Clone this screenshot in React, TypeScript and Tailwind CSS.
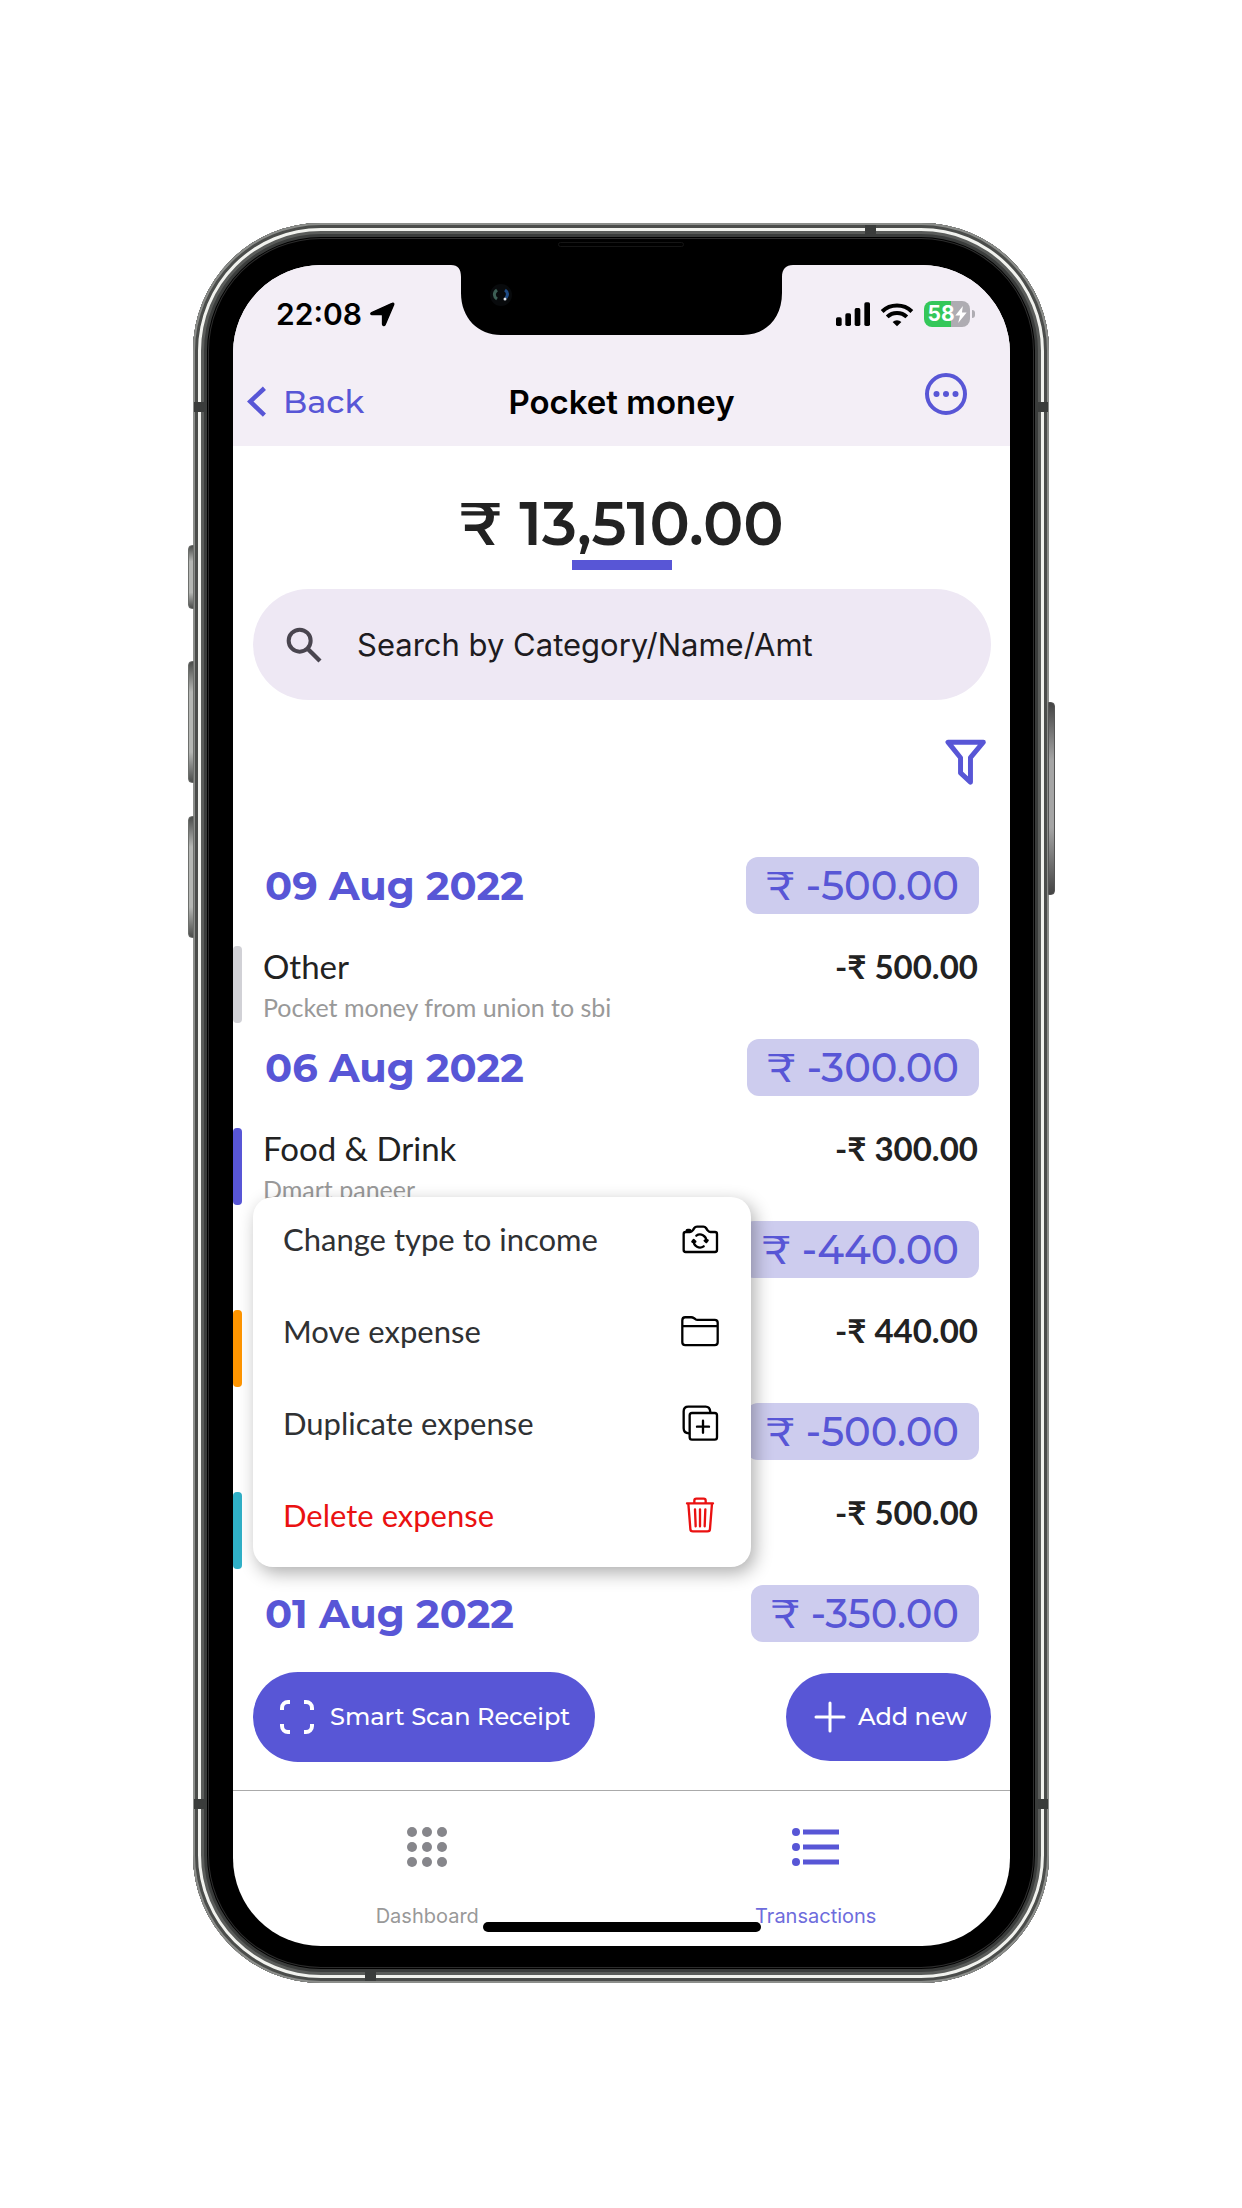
import type { ReactNode } from "react";

const DISPLAY = "font-['Montserrat','Inter',sans-serif]";
const BODY = "font-['Lato',sans-serif]";

type Entry = { name: string; note: string; amount: string; bar: string };
type Day = { date: string; total: string; entry?: Entry };

const days: Day[] = [
  {
    date: "09 Aug 2022",
    total: "₹ -500.00",
    entry: { name: "Other", note: "Pocket money from union to sbi", amount: "500.00", bar: "bg-[#d1d1d6]" },
  },
  {
    date: "06 Aug 2022",
    total: "₹ -300.00",
    entry: { name: "Food & Drink", note: "Dmart paneer", amount: "300.00", bar: "bg-[#5856d6]" },
  },
  { date: "", total: "₹ -440.00", entry: { name: "", note: "", amount: "440.00", bar: "bg-[#ff9500]" } },
  { date: "", total: "₹ -500.00", entry: { name: "", note: "", amount: "500.00", bar: "bg-[#30b0c7]" } },
  { date: "01 Aug 2022", total: "₹ -350.00" },
];

function CameraIcon() {
  return (
    <svg viewBox="186 100 114 90" className="h-[30px] w-[38px]" fill="none" stroke="currentColor" strokeWidth="7" strokeLinecap="round" strokeLinejoin="round" aria-hidden="true">
      <path d="M200 184H288a6 6 0 0 0 6-6V130a6 6 0 0 0-6-6H274c-4 0-6-2-9-6l-4-6c-2-3-4-4-8-4H234c-4 0-6 1-8 4l-4 6c-3 4-5 6-9 6H200a6 6 0 0 0-6 6V178a6 6 0 0 0 6 6Z" />
      <path d="M203 122v-2c0-2 1-2 3-2h5c2 0 3 0 3 2v2" />
      <path d="M232 135a19 19 0 0 1 30 16M254 167a19 19 0 0 1-30-16" />
      <path d="M257 150l5 4 4-5M220 153l4-5 5 5" />
    </svg>
  );
}

function FolderIcon() {
  return (
    <svg viewBox="182 375 116 96" className="h-8 w-[38px]" fill="none" stroke="currentColor" strokeWidth="7" strokeLinejoin="round" aria-hidden="true">
      <path d="M186 391c0-7 3-10 9-10H213c4 0 6 1 9 3l4 3c2 2 4 2 7 2H285c6 0 9 3 9 9V457c0 6-3 9-9 9H195c-6 0-9-3-9-9ZM186 408H294" />
    </svg>
  );
}

function DuplicateIcon() {
  return (
    <svg viewBox="186 643 114 114" className="size-[38px]" fill="none" stroke="currentColor" strokeWidth="7" strokeLinecap="round" strokeLinejoin="round" aria-hidden="true">
      <rect x="212" y="670" width="82" height="80" rx="7" />
      <path d="M210 731c-10 0-16-6-16-15V665c0-9 5-14 14-14H260c8 0 13 5 14 16M252 693v36M234 711h36" />
    </svg>
  );
}

function TrashIcon() {
  return (
    <svg viewBox="183 921 114 114" className="size-[38px]" fill="none" stroke="currentColor" strokeWidth="7" strokeLinecap="round" strokeLinejoin="round" aria-hidden="true">
      <path d="M201 943H279M205 943l6 76c0 5 3 8 8 8H262c5 0 8-3 8-8l6-76M223 942v-7c0-4 2-6 6-6H251c4 0 6 2 6 6v7M225 961l2 51M240 961v51M256 961l-2 51" />
    </svg>
  );
}

const actions: { label: string; icon: ReactNode; tone: string; iconTone: string }[] = [
  { label: "Change type to income", icon: <CameraIcon />, tone: "text-[#2f3133]", iconTone: "text-black" },
  { label: "Move expense", icon: <FolderIcon />, tone: "text-[#2f3133]", iconTone: "text-black" },
  { label: "Duplicate expense", icon: <DuplicateIcon />, tone: "text-[#2f3133]", iconTone: "text-black" },
  { label: "Delete expense", icon: <TrashIcon />, tone: "text-[#ea1111]", iconTone: "text-[#ea1111]" },
];

function StatusBar() {
  return (
    <div className="flex h-[98px] items-center justify-between pr-[35px] pl-[43px]">
      <div className="flex items-center gap-2 text-[30px] leading-10 font-semibold text-black">
        <span>22:08</span>
        <svg viewBox="569 276 76 76" className="size-[25px]" fill="currentColor" stroke="currentColor" strokeWidth="4" strokeLinejoin="round" aria-hidden="true">
          <path d="M636 280c4-2 6 0 5 4L615 345c-2 4-8 3-8-1V317c0-2-1-3-3-3H575c-4 0-5-4-1-6Z" />
        </svg>
      </div>
      <div className="flex items-center gap-[10px]">
        <svg viewBox="648 274 102 72" className="h-6 w-[34px]" aria-hidden="true">
          <rect x="648" y="320" width="17" height="26" rx="5" />
          <rect x="676" y="308" width="17" height="38" rx="5" />
          <rect x="704" y="292" width="17" height="54" rx="5" />
          <rect x="733" y="275" width="17" height="71" rx="5" />
        </svg>
        <svg viewBox="782 272 100 74" className="h-[25px] w-[34px]" fill="none" stroke="#000" strokeWidth="12" aria-hidden="true">
          <path d="M788 300a64 64 0 0 1 88 0M803 316a42 42 0 0 1 58 0" />
          <path d="M819 331a19 19 0 0 1 26 0l-13 13Z" fill="#000" stroke="none" />
        </svg>
        <div className="flex items-center gap-[2px]">
          <div className="flex h-[26px] w-[46px] items-center justify-center rounded-lg bg-[linear-gradient(90deg,#34c759_58%,#aeacb2_58%)] text-white">
            <span className="text-[21px] leading-[26px] font-bold">58</span>
            <svg viewBox="0 0 12 18" className="h-[17px] w-3" fill="currentColor" aria-hidden="true">
              <path d="M8 0 0 10h5L3 18l9-11H7Z" />
            </svg>
          </div>
          <span className="h-2 w-[3px] rounded-r-full bg-[#aeacb2]" />
        </div>
      </div>
    </div>
  );
}

function NavBar() {
  return (
    <nav className="grid h-[83px] grid-cols-[1fr_auto_1fr] items-center px-[14px] pb-[6px]">
      <button className={`flex items-center gap-4 justify-self-start text-[32px] leading-10 font-medium text-[#5856d6] ${DISPLAY}`}>
        <svg viewBox="200 528 62 94" className="h-[31px] w-5" fill="none" stroke="currentColor" strokeWidth="14" aria-hidden="true">
          <path d="M254 534 210 575l44 42" />
        </svg>
        Back
      </button>
      <h1 className="text-[33px] leading-10 font-semibold text-black">Pocket money</h1>
      <button aria-label="More options" className="mt-[9px] mr-7 self-start justify-self-end text-[#5856d6]">
        <svg viewBox="0 0 44 44" className="size-[44px]" fill="none" stroke="currentColor" strokeWidth="4" aria-hidden="true">
          <circle cx="22" cy="22" r="19" />
          <g fill="currentColor" stroke="none">
            <circle cx="12.5" cy="22" r="3" />
            <circle cx="22" cy="22" r="3" />
            <circle cx="31.5" cy="22" r="3" />
          </g>
        </svg>
      </button>
    </nav>
  );
}

function Notch() {
  return (
    <div className="absolute top-0 left-1/2 -translate-x-1/2">
      <svg viewBox="0 0 342 70" className="h-[70px] w-[342px]" aria-hidden="true">
        <path d="M0 0C7 0 10 4 10 12V28C10 53 27 70 50 70H292C315 70 331 53 331 28V12C331 4 335 0 342 0Z" fill="#000" />
        <circle cx="50" cy="30" r="11" fill="#080a0c" />
        <path d="M46 25c-4 3-3 7 0 9" fill="none" stroke="#3d5f55" strokeWidth="3" />
        <path d="M54 25c3 2 3 5 1 8" fill="none" stroke="#1f4b85" strokeWidth="3" />
        <circle cx="54" cy="34" r="1.5" fill="#dfe6f0" />
      </svg>
    </div>
  );
}

function DayGroup({ day }: { day: Day }) {
  return (
    <li>
      <div className="flex h-[57px] items-center justify-between pr-[31px] pl-8">
        <h2 className={`text-[40px] leading-[57px] font-bold text-[#5856d6] ${DISPLAY}`}>{day.date}</h2>
        <span className={`rounded-xl bg-[#cdccee] px-5 text-[40px] leading-[57px] font-medium text-[#5856d6] ${DISPLAY}`}>{day.total}</span>
      </div>
      {day.entry && (
        <div className="mt-8 mb-4 flex h-[77px] pr-8">
          <span className={`w-[9px] rounded-[4px] ${day.entry.bar}`} />
          <div className={`ml-[21px] flex-1 ${BODY}`}>
            <p className="text-[33px] leading-10 text-[#222]">{day.entry.name}</p>
            <p className="text-[25px] leading-[42px] text-[#999]">{day.entry.note}</p>
          </div>
          <p className={`text-[33px] leading-10 font-bold text-[#222] ${BODY}`}>-₹ {day.entry.amount}</p>
        </div>
      )}
    </li>
  );
}

function ActionMenu() {
  return (
    <div role="menu" className="absolute top-[340px] left-5 w-[498px] rounded-[20px] bg-white pb-[2px] shadow-[4px_6px_18px_rgba(0,0,0,0.32)]">
      {actions.map((a) => (
        <button
          key={a.label}
          role="menuitem"
          className={`flex h-[92px] w-full items-center justify-between pr-8 pb-2 pl-[30px] text-left text-[31px] leading-10 ${BODY} ${a.tone}`}
        >
          {a.label}
          <span className={a.iconTone}>{a.icon}</span>
        </button>
      ))}
    </div>
  );
}

function TabBar() {
  return (
    <div className="grid h-[156px] grid-cols-2 border-t border-[#aaa] text-[20px] leading-6">
      <a href="#dashboard" className="flex flex-col items-center pt-9 text-[#999]">
        <svg viewBox="0 0 41 41" className="size-[41px]" fill="#86868b" aria-hidden="true">
          {[5, 20, 35].map((y) => [5, 20, 35].map((x) => <circle key={`${x}-${y}`} cx={x} cy={y} r="5" />))}
        </svg>
        <span className="mt-9">Dashboard</span>
      </a>
      <a href="#transactions" className="flex flex-col items-center pt-9 text-[#6e6cdc]">
        <svg viewBox="0 0 47 41" className="h-[41px] w-[47px]" fill="#5856d6" aria-hidden="true">
          {[5, 20, 35].map((y) => (
            <g key={y}>
              <circle cx="4" cy={y} r="4" />
              <rect x="11" y={y - 2.5} width="36" height="5" />
            </g>
          ))}
        </svg>
        <span className="mt-9">Transactions</span>
      </a>
    </div>
  );
}

function SideButtons() {
  const left = "absolute -left-[5px] w-[6px] rounded-l-sm border border-[#6d6f6c] bg-[linear-gradient(#4b4d4b,#b5b7b4_25%,#b5b7b4_75%,#4b4d4b)]";
  return (
    <>
      <span className={`${left} top-[322px] h-16`} />
      <span className={`${left} top-[438px] h-[122px]`} />
      <span className={`${left} top-[593px] h-[122px]`} />
      <span className="absolute top-[479px] -right-[6px] h-[193px] w-[7px] rounded-r-sm border border-[#555] bg-[linear-gradient(#444,#a5a5a5_30%,#a5a5a5_65%,#444)]" />
      <span className="absolute top-[179px] left-[1px] h-[10px] w-[10px] bg-[#3a3c3b]" />
      <span className="absolute top-[179px] right-[1px] h-[10px] w-[10px] bg-[#3a3c3b]" />
      <span className="absolute bottom-[174px] left-[1px] h-[10px] w-[10px] bg-[#3a3c3b]" />
      <span className="absolute right-[1px] bottom-[174px] h-[10px] w-[10px] bg-[#3a3c3b]" />
      <span className="absolute top-[2px] right-[173px] h-[11px] w-[11px] bg-[#3a3c3b]" />
      <span className="absolute bottom-[2px] left-[172px] h-[9px] w-[11px] bg-[#3a3c3b]" />
      <span className="absolute top-[19px] left-1/2 h-[5px] w-[126px] -translate-x-1/2 rounded-full border border-[#151515]" />
    </>
  );
}

export default function App() {
  return (
    <div className="flex min-h-screen items-center justify-center bg-white pb-[2px] font-['Inter',sans-serif]">
      <div className="relative w-full max-w-[856px] rounded-[128px] bg-black pt-[42px] pr-[39px] pb-[37px] pl-10 shadow-[inset_0_0_0_2px_#8c8e8b,inset_0_0_0_5px_#4b4d4b,inset_0_0_0_8px_#f1f2ee,inset_0_0_0_11px_#5a5c5a,inset_0_0_0_14px_#3a3c3b,inset_0_0_0_15px_#000,inset_0_0_0_16px_#2c2c2c]">
        <SideButtons />
        <main className="relative overflow-hidden rounded-[88px] bg-white">
          <header className="bg-[#f3eef6]">
            <StatusBar />
            <NavBar />
          </header>
          <Notch />
          <section className="flex flex-col items-center pt-[42px]">
            <p className={`text-[60px] leading-[72px] font-semibold text-[#222] ${DISPLAY}`}>₹ 13,510.00</p>
            <span className="h-[10px] w-[100px] bg-[#5856d6]" />
          </section>
          <label className="mt-[19px] mr-[19px] ml-5 flex h-[111px] items-center gap-[35px] rounded-full bg-[#eee8f4] pr-8 pl-[33px]">
            <svg viewBox="166 496 108 108" className="size-9 shrink-0" fill="none" stroke="#49454f" strokeWidth="12" aria-hidden="true">
              <circle cx="207" cy="537" r="33" />
              <path d="M231 561 268 598" strokeWidth="13" />
            </svg>
            <input
              type="search"
              aria-label="Search transactions"
              placeholder="Search by Category/Name/Amt"
              className="min-w-0 flex-1 bg-transparent text-[31px] leading-10 text-[#1d1b20] outline-none placeholder:text-[#1d1b20]"
            />
          </label>
          <div className="mt-[39px] flex justify-end pr-6">
            <button aria-label="Filter" className="text-[#5856d6]">
              <svg viewBox="973 838 124 138" className="block h-[46px] w-[41px]" fill="none" stroke="currentColor" strokeWidth="15" strokeLinejoin="round" aria-hidden="true">
                <path d="M982 847H1089L1050 894V968L1020 940V894Z" />
              </svg>
            </button>
          </div>
          <div className="relative mt-[72px]">
            <ul>
              {days.map((d, i) => (
                <DayGroup key={i} day={d} />
              ))}
            </ul>
            <ActionMenu />
          </div>
          <div className={`mt-[30px] mr-[19px] mb-7 ml-5 flex items-center justify-between text-[24px] leading-8 font-medium text-white ${DISPLAY}`}>
            <button className="flex h-[90px] items-center gap-4 rounded-full bg-[#5856d6] pr-[25px] pl-[27px]">
              <svg viewBox="0 0 34 34" className="size-[34px]" fill="none" stroke="currentColor" strokeWidth="4" aria-hidden="true">
                <path d="M2 10V8a6 6 0 0 1 6-6h2M24 2h2a6 6 0 0 1 6 6v2M32 24v2a6 6 0 0 1-6 6h-2M10 32H8a6 6 0 0 1-6-6v-2" />
              </svg>
              Smart Scan Receipt
            </button>
            <button className="flex h-[88px] items-center gap-3 rounded-full bg-[#5856d6] pr-6 pl-7">
              <svg viewBox="0 0 32 32" className="size-8" fill="none" stroke="currentColor" strokeWidth="3" strokeLinecap="round" aria-hidden="true">
                <path d="M16 2v28M2 16h28" />
              </svg>
              Add new
            </button>
          </div>
          <TabBar />
          <span className="absolute bottom-[14px] left-1/2 h-[10px] w-[278px] -translate-x-1/2 rounded-full bg-black" />
        </main>
      </div>
    </div>
  );
}
